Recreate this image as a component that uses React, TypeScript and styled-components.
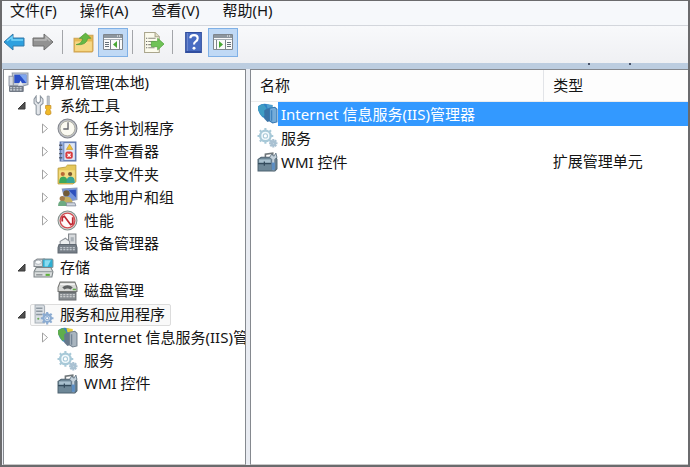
import React, { useState } from "react";
import styled, { createGlobalStyle, css } from "styled-components";

const GlobalStyle = createGlobalStyle`
  * { box-sizing: border-box; }
  body {
    margin: 0;
    color: #141414;
    font-family: "Noto Sans", "Noto Sans CJK SC", sans-serif;
    font-size: 15px;
    line-height: 23px;
  }
  button { font: inherit; color: inherit; background: none; border: 0; padding: 0; margin: 0; }
`;

const Window = styled.div`
  display: flex;
  flex-direction: column;
  min-height: 100vh;
  border: 2px solid #6b6b6d;
  border-top-width: 1px;
  background: #f0f0f0;
`;

const MenuBar = styled.nav`
  display: flex;
  gap: 23px;
  height: 25px;
  padding-left: 8px;
  background: #f6f8fb;
  border-bottom: 1px solid #d3d6dc;
`;

const MenuButton = styled.button`
  height: 18px;
  line-height: 18px;
  white-space: nowrap;
`;

const Toolbar = styled.div`
  display: flex;
  align-items: center;
  height: 37px;
  padding-bottom: 5px;
  background: linear-gradient(#f8f9fb, #eff0f3);
`;

const NavGroup = styled.div`
  display: flex;
  gap: 5px;
  margin-right: 3px;
`;

const ToolButton = styled.button<{ $narrow?: boolean; $pressed?: boolean }>`
  display: flex;
  align-items: center;
  justify-content: center;
  flex: none;
  width: ${(p) => (p.$narrow ? 24 : 30)}px;
  height: 29px;
  ${(p) =>
    p.$pressed &&
    css`
      background: #c0d9f5;
      border: 1px solid #7fb0e6;
    `}
`;

const Separator = styled.span`
  width: 10px;
  height: 24px;
  padding-left: 4px;
  &::before {
    content: "";
    display: block;
    width: 1px;
    height: 100%;
    background: #a3a5a9;
  }
`;

const Strip = styled.div`
  display: flex;
  justify-content: flex-end;
  gap: 39px;
  height: 6px;
  padding-right: 57px;
  background: #bccde0;
`;

const Dot = styled.i`
  width: 2px;
  height: 2px;
  background: #47536a;
`;

const Panes = styled.div`
  display: grid;
  grid-template-columns: minmax(0, 243px) minmax(0, 1fr);
  column-gap: 4px;
  flex: 1;
  padding-left: 1px;
  background: #e9ecf2;
`;

const Pane = styled.section`
  min-width: 0;
  overflow: hidden;
  background: #fff;
  border: 1px solid #85898f;
  border-bottom-color: #c9c9c9;
`;

const TreePane = styled(Pane)`
  padding-top: 1px;
`;

const ListPane = styled(Pane)`
  border-right: 0;
`;

const Branch = styled.ul`
  margin: 0;
  padding: 0;
  list-style: none;
`;

const Node = styled.li`
  display: block;
`;

const GroupNode = styled.li`
  & + & { margin-top: 1px; }
`;

const Row = styled.div<{ $level: number }>`
  display: flex;
  align-items: center;
  height: 23px;
  padding-left: ${(p) => [4, 11, 35][p.$level]}px;
  white-space: nowrap;
`;

const Twisty = styled.button`
  display: flex;
  align-items: center;
  justify-content: center;
  flex: none;
  width: 12px;
  height: 20px;
  margin-right: 6px;
`;

const TwistySpace = styled.span`
  flex: none;
  width: 18px;
`;

const Item = styled.span<{ $selected?: boolean }>`
  display: flex;
  align-items: center;
  gap: 6px;
  height: 22px;
  ${(p) =>
    p.$selected &&
    css`
      margin-left: -3px;
      padding: 0 5px 0 2px;
      background: #f9f9f9;
      border: 1px solid #dcdcdc;
      border-radius: 2px;
    `}
`;

const Glyph = styled.svg`
  display: block;
  flex: none;
`;

const Table = styled.table`
  width: 100%;
  table-layout: fixed;
  border-collapse: collapse;
`;

const HeadCell = styled.th<{ $wide?: boolean }>`
  width: ${(p) => (p.$wide ? "67%" : "auto")};
  height: 31px;
  padding: 0 9px;
  font-weight: 400;
  text-align: left;
  background: #fdfdfd;
  border-bottom: 1px solid #ececec;
  & + & { border-left: 1px solid #e2e4e8; }
`;

const Cell = styled.td<{ $selected?: boolean }>`
  height: 24px;
  padding: 0 0 0 9px;
  white-space: nowrap;
  ${(p) => p.$selected && css`background: #3399ff;`}
`;

const NameCell = styled.td`
  height: 24px;
  padding: 0 0 0 6px;
`;

const Entry = styled.div`
  display: flex;
  align-items: center;
  height: 24px;
`;

const EntryLabel = styled.span<{ $selected?: boolean }>`
  flex: 1;
  height: 24px;
  padding-left: 3px;
  line-height: 24px;
  white-space: nowrap;
  ${(p) => p.$selected && css`background: #3399ff; color: #fff;`}
`;

function Icon({ children, size = 21 }: { children: React.ReactNode; size?: number }) {
  return (
    <Glyph width={size} height={size} viewBox="0 0 20 20" aria-hidden="true">
      {children}
    </Glyph>
  );
}

const ComputerIcon = () => (
  <Icon>
    <path d="M4 1h15v11l-4 1H5z" fill="#c3cad5" stroke="#8f99aa" />
    <path d="M6 2.500h11.500v8H6z" fill="#2b50c8" />
    <path d="M11 2.500h6.500v8z" fill="#7ea6f0" />
    <path d="M1 4h4v9H1z" fill="#d5d9df" stroke="#9198a5" />
    <path d="M12 8l3 6H9z" fill="#e7ebf2" />
    <rect x="1" y="13" width="14" height="6" rx="1" fill="#727a86" />
    <path d="M2 15h12M2 17h12" stroke="#dce1e7" strokeDasharray="2 1" />
  </Icon>
);

const ToolsIcon = () => (
  <Icon>
    <path d="M3 1v5l2 2 2-2V1l2.500 3v4L7 10v8q-2 2-4 0v-8L1 8V4z" fill="#e3e6ea" stroke="#8b949e" />
    <path d="M13.500 1h2v9h-2z" fill="#c4c9d0" stroke="#8d96a0" strokeWidth=".6" />
    <path d="M12 10h5v3l-1 1 1 2v2q-2.500 2-5 0v-2l1-2-1-1z" fill="#f0b928" stroke="#c99227" strokeWidth=".8" />
  </Icon>
);

const ClockIcon = () => (
  <Icon>
    <circle cx="10" cy="10" r="9" fill="#bfc1c6" stroke="#85888f" />
    <circle cx="10" cy="10" r="7" fill="#fbfaf1" stroke="#a4a493" strokeWidth=".7" />
    <path d="M10.500 4v6.500H6" fill="none" stroke="#66676d" strokeWidth="1.300" />
  </Icon>
);

const EventIcon = () => (
  <Icon>
    <path d="M3 1h15v18H3z" fill="#6f8cc4" stroke="#5670a8" />
    <path d="M7 2h10v16H7z" fill="#dfe7f6" />
    <path d="M5 1v18" stroke="#9fb4e0" strokeWidth="2" />
    <path d="M2 4h3M2 8h3M2 12h3M2 16h3" stroke="#555d6e" strokeWidth="1.300" />
    <path d="M12 3l3 5H9z" fill="#f3c630" stroke="#bb9132" strokeWidth=".6" />
    <rect x="8" y="10" width="7" height="7" rx="2" fill="#d83b3f" />
    <path d="M10 12l3 3m0-3l-3 3" stroke="#fff" strokeWidth="1.200" />
  </Icon>
);

const SharedFolderIcon = () => (
  <Icon>
    <path d="M1 4l7-1 2-2h8v16l-3 2H1z" fill="#e6c85b" stroke="#b79a3c" strokeWidth=".8" />
    <path d="M2 6h15v11H2z" fill="#f4dd83" />
    <circle cx="5.500" cy="9.500" r="2" fill="#b86836" />
    <circle cx="12.500" cy="9.500" r="2" fill="#7b5831" />
    <path d="M2 18q0-6 4-6t4 6z" fill="#3da85b" />
    <path d="M9 18q0-6 4-6t4 6z" fill="#38a395" />
  </Icon>
);

const UsersIcon = () => (
  <Icon>
    <path d="M5 2l14-1v11l-11 2z" fill="#7594dc" stroke="#8b98b8" />
    <path d="M11 3l7-.500V10z" fill="#2d50bd" />
    <circle cx="9" cy="6" r="3" fill="#715b38" />
    <path d="M4 15q0-6 5-6t6 6z" fill="#c4af61" />
    <circle cx="5" cy="11" r="2.500" fill="#a37c4a" />
    <path d="M1 18q0-5 4-5t5 5z" fill="#6eaa83" />
    <path d="M9 15h8l1 3H9z" fill="#cfd6df" stroke="#777f91" strokeWidth=".7" />
  </Icon>
);

const PerformanceIcon = () => (
  <Icon>
    <circle cx="10" cy="10" r="9" fill="#d9dedc" stroke="#858e8b" />
    <circle cx="10" cy="10" r="7" fill="#fffafa" stroke="#d34b50" strokeWidth="1.200" />
    <path d="M5 11V7l2-1 6 8 2-1V7" fill="none" stroke="#bd2630" strokeWidth="1.700" />
  </Icon>
);

const DeviceIcon = () => (
  <Icon>
    <path d="M11 1h7v12h-7z" fill="#d7dadd" stroke="#80858a" />
    <path d="M13 4h3v4h-3z" fill="#a8afb6" />
    <path d="M3 8l5-3 4 3v4H3z" fill="#eceeef" stroke="#8d9299" />
    <path d="M2 11h16l1 3v5H1v-5z" fill="#767e87" stroke="#5e6770" />
    <path d="M3 14h14M3 16h14" stroke="#d6dce1" strokeDasharray="2 1" />
  </Icon>
);

const StorageIcon = () => (
  <Icon>
    <path d="M1 4l3-2h7v7H1z" fill="#dfe2e4" stroke="#858b90" />
    <ellipse cx="5" cy="5" rx="3" ry="2" fill="#f7f9fa" stroke="#9ca4aa" strokeWidth=".7" />
    <rect x="9" y="2" width="10" height="8" rx="1" fill="#2faed1" stroke="#7d959d" />
    <path d="M11 3h6l-3 6h-3z" fill="#8adcf0" />
    <path d="M3 10l-2 4v5h17l1-5-2-4z" fill="#d9dddd" stroke="#7d8487" />
    <path d="M1 14h17" stroke="#8f9799" />
    <path d="M12 17h4" stroke="#5eaf39" strokeWidth="2" />
    <path d="M3 17h6" stroke="#73797c" />
  </Icon>
);

const DiskIcon = () => (
  <Icon>
    <path d="M3 2h14l2 5v4H1V7z" fill="#d7d8d6" stroke="#747573" />
    <path d="M5 7q5-4 10 0l-2 2q-3-2-6 0z" fill="#5f6263" />
    <path d="M3 4h14" stroke="#fff" />
    <path d="M2 12h16v7H2z" fill="#868b8f" stroke="#686d70" />
    <path d="M3 14h14M3 16h14" stroke="#e1e3e4" strokeDasharray="2 1" />
    <path d="M15 9h3" stroke="#63ac48" strokeWidth="1.500" />
  </Icon>
);

const teeth = (cx: number, cy: number, r: number) =>
  Array.from({ length: 8 }, (_, i) => {
    const a = (i * Math.PI) / 4;
    return `M${cx + Math.cos(a) * (r - 1)} ${cy + Math.sin(a) * (r - 1)}L${cx + Math.cos(a) * (r + 1.5)} ${cy + Math.sin(a) * (r + 1.5)}`;
  }).join("");

function Cog({ cx, cy, r, color }: { cx: number; cy: number; r: number; color: string }) {
  return (
    <g fill="none" stroke={color}>
      <path d={teeth(cx, cy, r)} strokeWidth="2" />
      <circle cx={cx} cy={cy} r={r - 1} strokeWidth="2.2" fill="#f3fafd" />
      <circle cx={cx} cy={cy} r={r / 3} strokeWidth="1" fill="#fff" />
    </g>
  );
}

const ServerAppsIcon = () => (
  <Icon>
    <path d="M2 1h8l1 1v16H2z" fill="#d9dee3" stroke="#a9b1b9" />
    <path d="M3 4h6M3 7h6M3 10h6" stroke="#8d98a1" strokeWidth="1.400" />
    <circle cx="5" cy="14" r="1" fill="#67aa52" />
    <Cog cx={13.5} cy={13.5} r={4.5} color="#8babd1" />
  </Icon>
);

const IisIcon = ({ selected = false }: { selected?: boolean }) => (
  <Icon>
    <path d="M1 3q5-4 11-1l1 10-5 3q-7-3-7-12z" fill={selected ? "#2f82c4" : "#3d86bd"} />
    <path d="M1 3l5-2 3 4-2 3 1 4-3 1-4-6z" fill={selected ? "#3f9cc4" : "#5fae4c"} />
    <path d="M9 1l6 1v4l-5-1z" fill={selected ? "#4f9fd0" : "#e6cf3d"} />
    <path d="M7 7l4-2 2 2v10l-3 1-3-3z" fill={selected ? "#3a72a5" : "#66788a"} />
    <path d="M12 5l5-1 2 2v12l-4 1-3-2z" fill={selected ? "#74acd9" : "#a9b5bf"} stroke={selected ? "#3576b0" : "#74828f"} />
    <path d="M14 7v10" stroke={selected ? "#347ab8" : "#687b8c"} />
  </Icon>
);

const ServicesIcon = () => (
  <Icon>
    <Cog cx={8} cy={8.5} r={6} color="#a8c9d8" />
    <Cog cx={15.5} cy={15.5} r={2.5} color="#a9c1d2" />
  </Icon>
);

const WmiIcon = () => (
  <Icon>
    <path d="M8 6V3l7-1v4" fill="none" stroke="#6f7679" strokeWidth="1.500" />
    <path d="M1 8l3-2h14l1 2v9l-2 2H1z" fill="#6d8797" stroke="#4d6270" />
    <path d="M2 8h11v3H2z" fill="#a9c1cf" />
    <path d="M1 12h13M7 10v4" stroke="#344c5d" strokeWidth="1.200" />
    <path d="M14 3l2 2 2-3 1 4-2 2v10q-2 2-3 0V8l-2-2z" fill="#c3d1db" stroke="#596e7d" strokeWidth=".8" />
    <path d="M14 11h3v7h-3z" fill="#5a8dc2" />
  </Icon>
);

function ArrowIcon({ forward = false }: { forward?: boolean }) {
  return (
    <Glyph width="22" height="20" viewBox="0 0 22 20" aria-hidden="true">
      <path
        d={forward ? "M21 10l-9-8v4H1v8h11v4z" : "M1 10l9-8v4h11v8H10v4z"}
        fill={forward ? "#929292" : "#2da0df"}
        stroke={forward ? "#6f6f6f" : "#347aaa"}
        strokeLinejoin="round"
      />
      <path
        d={forward ? "M2 8h12V5l4 4" : "M4 9l5-4v3h11"}
        fill="none"
        stroke={forward ? "#b9b9b9" : "#75d5fa"}
        strokeWidth="1.500"
      />
    </Glyph>
  );
}

const FolderUpIcon = () => (
  <Icon>
    <path d="M1 6h7l2-3h9v15l-1 1H1z" fill="#e7b952" stroke="#cda253" />
    <path d="M2 9h16v9H2z" fill="#f7d887" />
    <path d="M3 12q6-1 6-6H6l6-5 5 5h-3q-1 7-11 6z" fill="#66b844" stroke="#4f9e3c" strokeWidth=".7" />
  </Icon>
);

function PaneIcon({ right = false }: { right?: boolean }) {
  return (
    <Glyph width="20" height="18" viewBox="0 0 20 18" aria-hidden="true">
      <path d="M.500 1.500h19v15H.500z" fill="#fafafa" stroke="#7e858c" />
      <path d="M1 2h18v3H1z" fill="#8d969e" />
      <path d="M14 3h4" stroke="#fff" strokeDasharray="1 1" />
      <path d="M1 6.500h18" stroke="#a7afb6" />
      {right ? (
        <>
          <path d="M12.500 7v9M3.500 7v9" stroke="#7e858c" />
          <path d="M14 9.500h4M14 11.500h4M14 13.500h4" stroke="#667079" />
          <path d="M6 8l4 3.500L6 15z" fill="#49a834" />
        </>
      ) : (
        <>
          <path d="M7.500 7v9M16.500 7v9" stroke="#7e858c" />
          <path d="M2 9.500h4M2 11.500h4M2 13.500h4" stroke="#667079" />
          <path d="M14 8l-4 3.500 4 3.500z" fill="#49a834" />
        </>
      )}
    </Glyph>
  );
}

const ExportIcon = () => (
  <Icon>
    <path d="M1.500.500h10l4 4v15h-14z" fill="#fcfbed" stroke="#aaa68d" />
    <path d="M11.500.500v4h4" fill="#e5e1c9" stroke="#aaa68d" />
    <path d="M3 6h1M3 9h1M3 12h1M3 15h1" stroke="#555" />
    <path d="M5 6h7M5 9h7M5 12h6M5 15h6" stroke="#89897f" />
    <path d="M8 9h6V6l6 5.500-6 5.500v-3H8z" fill="#6fc356" stroke="#5aa747" strokeWidth=".8" />
  </Icon>
);

const HelpIcon = () => (
  <Icon>
    <path d="M2 0h16v20H2z" fill="#304e9f" />
    <path d="M4 1h13v17H4z" fill="#496cc2" />
    <path d="M4 1v17" stroke="#7b95d7" />
    <path d="M7 6q0-3 3.500-3T14 6q0 2-2 3.200-1.500.800-1.500 2.800" fill="none" stroke="#fff" strokeWidth="2" />
    <circle cx="10.500" cy="15.500" r="1.400" fill="#fff" />
  </Icon>
);

const OpenMark = () => (
  <Glyph width="9" height="9" viewBox="0 0 9 9" aria-hidden="true">
    <path d="M8 1v7H1z" fill="#505050" stroke="#3a3a3a" />
  </Glyph>
);

const ClosedMark = () => (
  <Glyph width="8" height="11" viewBox="0 0 8 11" aria-hidden="true">
    <path d="M1.500 1v9l5-4.500z" fill="#fff" stroke="#a2a2a2" />
  </Glyph>
);

interface Leaf {
  name: string;
  icon: React.ReactNode;
  expandable?: boolean;
}

const groups: { name: string; icon: React.ReactNode; items: Leaf[] }[] = [
  {
    name: "系统工具",
    icon: <ToolsIcon />,
    items: [
      { name: "任务计划程序", icon: <ClockIcon />, expandable: true },
      { name: "事件查看器", icon: <EventIcon />, expandable: true },
      { name: "共享文件夹", icon: <SharedFolderIcon />, expandable: true },
      { name: "本地用户和组", icon: <UsersIcon />, expandable: true },
      { name: "性能", icon: <PerformanceIcon />, expandable: true },
      { name: "设备管理器", icon: <DeviceIcon /> },
    ],
  },
  { name: "存储", icon: <StorageIcon />, items: [{ name: "磁盘管理", icon: <DiskIcon /> }] },
  {
    name: "服务和应用程序",
    icon: <ServerAppsIcon />,
    items: [
      { name: "Internet 信息服务(IIS)管理器", icon: <IisIcon />, expandable: true },
      { name: "服务", icon: <ServicesIcon /> },
      { name: "WMI 控件", icon: <WmiIcon /> },
    ],
  },
];

const entries = [
  { name: "Internet 信息服务(IIS)管理器", type: "", icon: <IisIcon selected /> },
  { name: "服务", type: "", icon: <ServicesIcon /> },
  { name: "WMI 控件", type: "扩展管理单元", icon: <WmiIcon /> },
];

function Tree() {
  const [closed, setClosed] = useState<string[]>([]);
  const toggle = (name: string) =>
    setClosed((c) => (c.includes(name) ? c.filter((n) => n !== name) : [...c, name]));

  return (
    <Branch role="tree">
      <Node role="treeitem" aria-expanded="true">
        <Row $level={0}>
          <Item>
            <ComputerIcon />
            计算机管理(本地)
          </Item>
        </Row>
        <Branch role="group">
          {groups.map((group) => {
            const open = !closed.includes(group.name);
            const selected = group.name === "服务和应用程序";
            return (
              <GroupNode key={group.name} role="treeitem" aria-expanded={open} aria-selected={selected}>
                <Row $level={1}>
                  <Twisty aria-label={group.name} onClick={() => toggle(group.name)}>
                    {open ? <OpenMark /> : <ClosedMark />}
                  </Twisty>
                  <Item $selected={selected}>
                    {group.icon}
                    {group.name}
                  </Item>
                </Row>
                {open && (
                  <Branch role="group">
                    {group.items.map((item) => (
                      <Node key={item.name} role="treeitem">
                        <Row $level={2}>
                          {item.expandable ? (
                            <Twisty aria-label={item.name}>
                              <ClosedMark />
                            </Twisty>
                          ) : (
                            <TwistySpace />
                          )}
                          <Item>
                            {item.icon}
                            {item.name}
                          </Item>
                        </Row>
                      </Node>
                    ))}
                  </Branch>
                )}
              </GroupNode>
            );
          })}
        </Branch>
      </Node>
    </Branch>
  );
}

export default function App() {
  return (
    <>
      <GlobalStyle />
      <Window>
        <MenuBar>
          {["文件(F)", "操作(A)", "查看(V)", "帮助(H)"].map((label) => (
            <MenuButton key={label}>{label}</MenuButton>
          ))}
        </MenuBar>
        <Toolbar role="toolbar">
          <NavGroup>
            <ToolButton $narrow aria-label="后退"><ArrowIcon /></ToolButton>
            <ToolButton $narrow aria-label="前进"><ArrowIcon forward /></ToolButton>
          </NavGroup>
          <Separator />
          <ToolButton aria-label="向上"><FolderUpIcon /></ToolButton>
          <ToolButton $pressed aria-pressed="true" aria-label="控制台树"><PaneIcon /></ToolButton>
          <Separator />
          <ToolButton aria-label="导出列表"><ExportIcon /></ToolButton>
          <Separator />
          <ToolButton aria-label="帮助"><HelpIcon /></ToolButton>
          <ToolButton $pressed aria-pressed="true" aria-label="操作窗格"><PaneIcon right /></ToolButton>
        </Toolbar>
        <Strip>
          <Dot />
          <Dot />
        </Strip>
        <Panes>
          <TreePane>
            <Tree />
          </TreePane>
          <ListPane>
            <Table>
              <thead>
                <tr>
                  <HeadCell $wide scope="col">名称</HeadCell>
                  <HeadCell scope="col">类型</HeadCell>
                </tr>
              </thead>
              <tbody>
                {entries.map((entry, i) => (
                  <tr key={entry.name} aria-selected={i === 0}>
                    <NameCell>
                      <Entry>
                        {entry.icon}
                        <EntryLabel $selected={i === 0}>{entry.name}</EntryLabel>
                      </Entry>
                    </NameCell>
                    <Cell $selected={i === 0}>{entry.type}</Cell>
                  </tr>
                ))}
              </tbody>
            </Table>
          </ListPane>
        </Panes>
      </Window>
    </>
  );
}
